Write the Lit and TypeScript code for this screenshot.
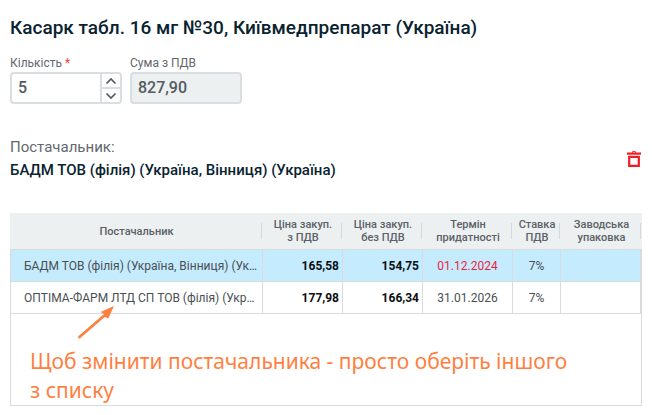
import { LitElement, html, css, svg } from "lit";
import { customElement, property, state } from "lit/decorators.js";
import { classMap } from "lit/directives/class-map.js";

interface Offer {
  supplier: string;
  gross: string;
  net: string;
  expiry: string;
  expired: boolean;
  vat: string;
  pack: string;
}

const OFFERS: Offer[] = [
  {
    supplier: "БАДМ ТОВ (філія) (Україна, Вінниця) (Україна)",
    gross: "165,58",
    net: "154,75",
    expiry: "01.12.2024",
    expired: true,
    vat: "7%",
    pack: "",
  },
  {
    supplier: "ОПТІМА-ФАРМ ЛТД СП ТОВ (філія) (Україна)",
    gross: "177,98",
    net: "166,34",
    expiry: "31.01.2026",
    expired: false,
    vat: "7%",
    pack: "",
  },
];

@customElement("offer-table")
export class OfferTable extends LitElement {
  @property({ attribute: false }) offers: Offer[] = [];
  @state() private selected = 0;

  static styles = css`
    :host {
      display: block;
    }
    table {
      width: 100%;
      table-layout: fixed;
      border-collapse: separate;
      border-spacing: 0;
    }
    .price {
      width: 80px;
    }
    .expiry {
      width: 90px;
    }
    .vat {
      width: 48px;
    }
    .pack {
      width: 81px;
    }
    th {
      box-sizing: border-box;
      height: 37px;
      padding: 0 2px;
      font-size: 11px;
      line-height: 13px;
      font-weight: 500;
      color: #5b6166;
      background: linear-gradient(#d5d9dc, #d5d9dc) no-repeat right 1px center / 1px 16px #ecf0f1;
      border-bottom: 1px solid #d9dcdf;
    }
    td {
      box-sizing: border-box;
      height: 32px;
      padding: 0 4px;
      font-size: 12px;
      line-height: 16px;
      color: #4a4f52;
      text-align: center;
      white-space: nowrap;
      border-right: 1px solid #d9dcdf;
      border-bottom: 1px solid #d9dcdf;
    }
    td:first-child {
      padding-left: 13px;
      text-align: left;
      overflow: hidden;
      text-overflow: ellipsis;
      border-left: 1px solid #d9dcdf;
    }
    td:last-child {
      border-right-width: 2px;
    }
    .selected td {
      background: #c5ebff;
    }
    td.money {
      padding-right: 3px;
      text-align: right;
      font-weight: 700;
      color: #0b0f12;
    }
    td.expired {
      color: #f01c3c;
    }
  `;

  render() {
    return html`
      <table>
        <colgroup>
          <col />
          <col class="price" />
          <col class="price" />
          <col class="expiry" />
          <col class="vat" />
          <col class="pack" />
        </colgroup>
        <thead>
          <tr>
            <th scope="col">Постачальник</th>
            <th scope="col">Ціна закуп.<br />з ПДВ</th>
            <th scope="col">Ціна закуп.<br />без ПДВ</th>
            <th scope="col">Термін<br />придатності</th>
            <th scope="col">Ставка<br />ПДВ</th>
            <th scope="col">Заводська<br />упаковка</th>
          </tr>
        </thead>
        <tbody>
          ${this.offers.map(
            (o, i) => html`
              <tr
                class=${classMap({ selected: i === this.selected })}
                @click=${() => (this.selected = i)}
              >
                <td>${o.supplier}</td>
                <td class="money">${o.gross}</td>
                <td class="money">${o.net}</td>
                <td class=${classMap({ expired: o.expired })}>${o.expiry}</td>
                <td>${o.vat}</td>
                <td>${o.pack}</td>
              </tr>
            `
          )}
        </tbody>
      </table>
    `;
  }
}

const chevron = (d: string) => svg`<path d=${d} fill="none" stroke="#555b60" stroke-width="1.7" />`;

@customElement("app-root")
export class AppRoot extends LitElement {
  @state() private quantity = 5;

  static styles = css`
    :host {
      display: block;
      background: #fff;
      font-family: Roboto, "Liberation Sans", sans-serif;
      color: #0a2330;
    }
    main {
      padding: 16px 10px 10px;
    }
    h1 {
      margin: 0;
      font-size: 19px;
      line-height: 24px;
      font-weight: 500;
    }
    .fields {
      display: flex;
      gap: 8px;
      margin-top: 15px;
    }
    .field {
      width: 112px;
    }
    label {
      display: block;
      font-size: 12px;
      line-height: 16px;
      color: #62686d;
    }
    .required {
      color: #f4443a;
    }
    .box {
      box-sizing: border-box;
      display: flex;
      height: 32px;
      margin-top: 1px;
      border: 2px solid #d9dee1;
      border-radius: 4px;
      background: #fff;
      overflow: hidden;
    }
    .box.readonly {
      background: #ecf0f1;
    }
    input {
      flex: 1;
      min-width: 0;
      padding: 0 6px;
      border: 0;
      outline: 0;
      background: transparent;
      font: 500 16px/24px Roboto, "Liberation Sans", sans-serif;
      color: #555b60;
    }
    .spin {
      display: grid;
      grid-template-rows: 1fr 1fr;
      gap: 2px;
      width: 18px;
      border-left: 2px solid #d9dee1;
      background: #d9dee1;
    }
    button {
      display: flex;
      align-items: center;
      justify-content: center;
      padding: 0;
      border: 0;
      background: #fff;
      cursor: pointer;
    }
    .supplier {
      display: flex;
      align-items: center;
      justify-content: space-between;
      margin: 32px 0 31px;
    }
    .supplier p {
      margin: 0;
      font-size: 15px;
      line-height: 23px;
    }
    .supplier .caption {
      color: #62686d;
    }
    .supplier .name {
      font-weight: 500;
    }
    .list {
      position: relative;
    }
    .hint {
      margin: 0;
      padding: 33px 70px 0 19px;
      min-height: 91px;
      box-sizing: border-box;
      border: 1px solid #d9dcdf;
      border-top: 0;
      font-family: "Noto Sans", sans-serif;
      font-size: 21px;
      line-height: 29px;
      color: #ff7f41;
    }
    .arrow {
      position: absolute;
      left: 66px;
      top: 92px;
      pointer-events: none;
    }
  `;

  render() {
    return html`
      <main>
        <h1>Касарк табл. 16 мг №30, Київмедпрепарат (Україна)</h1>
        <div class="fields">
          <div class="field">
            <label for="qty">Кількість <span class="required">*</span></label>
            <div class="box">
              <input id="qty" type="text" inputmode="numeric" .value=${String(this.quantity)} />
              <div class="spin">
                <button type="button" aria-label="Збільшити" @click=${() => this.quantity++}>
                  <svg width="12" height="8" viewBox="0 0 12 8">${chevron("M1.5 6.5L6 2L10.5 6.5")}</svg>
                </button>
                <button type="button" aria-label="Зменшити" @click=${() => this.quantity--}>
                  <svg width="12" height="8" viewBox="0 0 12 8">${chevron("M1.5 1.5L6 6L10.5 1.5")}</svg>
                </button>
              </div>
            </div>
          </div>
          <div class="field">
            <label for="sum">Сума з ПДВ</label>
            <div class="box readonly">
              <input id="sum" type="text" readonly value="827,90" />
            </div>
          </div>
        </div>
        <section class="supplier">
          <div>
            <p class="caption">Постачальник:</p>
            <p class="name">БАДМ ТОВ (філія) (Україна, Вінниця) (Україна)</p>
          </div>
          <button type="button" aria-label="Видалити">
            <svg width="16" height="18" viewBox="0 0 16 18">
              <path d="M6.500 3V1.500H9.500V3" fill="none" stroke="#f4433f" />
              <rect x="1" y="2.500" width="14" height="2.200" fill="#f01c24" />
              <path d="M3.200 6.800H12.800V15.800H3.200Z" fill="none" stroke="#f01c24" stroke-width="2.200" />
            </svg>
          </button>
        </section>
        <div class="list">
          <offer-table .offers=${OFFERS}></offer-table>
          <p class="hint">Щоб змінити постачальника - просто оберіть іншого з списку</p>
          <svg class="arrow" width="42" height="36" viewBox="0 0 42 36" aria-hidden="true">
            <path d="M3.500 32L29 10" stroke="#ff7f41" stroke-width="2.800" stroke-linecap="round" />
            <path d="M38 1L24.500 7L28 9L29 12L32.300 13.500Z" fill="#ff7f41" />
          </svg>
        </div>
      </main>
    `;
  }
}
